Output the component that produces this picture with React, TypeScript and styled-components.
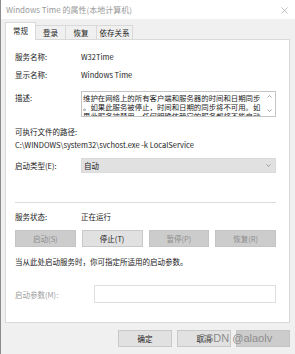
import React from "react";
import styled, { createGlobalStyle, css } from "styled-components";

const Global = createGlobalStyle`
  html, body { margin: 0; padding: 0; background: #f0f0f0; }
  * { box-sizing: border-box; }
`;

const Window = styled.div`
  position: relative;
  width: 295px;
  height: 354px;
  background: #f0f0f0;
  border-left: 1px solid #8c8c8c;
  display: flex;
  flex-direction: column;
  font-family: "Noto Sans CJK SC", sans-serif;
  font-size: 7.5px;
  color: #1a1a1a;
  overflow: hidden;
`;

const TitleBar = styled.div`
  height: 19px;
  background: #fff;
  display: flex;
  align-items: center;
  justify-content: space-between;
  padding: 0 7px 0 5px;
  color: #9a9a9a;
  font-size: 8px;
`;

const Close = styled.svg`
  width: 7px;
  height: 7px;
  margin-top: 1px;
`;

const TabRow = styled.div`
  display: flex;
  align-items: flex-end;
  height: 20px;
  margin-left: 4px;
  position: relative;
  z-index: 1;
`;

const Tab = styled.div<{ $active?: boolean; $w: number }>`
  width: ${(p) => p.$w}px;
  height: 14px;
  display: flex;
  align-items: center;
  justify-content: center;
  border: 1px solid #d9d9d9;
  border-bottom: none;
  margin-right: -1px;
  background: #f0f0f0;
  color: #1a1a1a;
  ${(p) =>
    p.$active &&
    css`
      height: 17px;
      background: #fff;
      margin-bottom: -1px;
      height: 18px;
      padding-bottom: 2px;
    `}
`;

const Panel = styled.div`
  margin: 0 5px 0 4px;
  height: 284px;
  background: #fff;
  border: 1px solid #d9d9d9;
  padding: 0 13px 0 9px;
  display: flex;
  flex-direction: column;
`;

const Field = styled.div<{ $mt: number; $start?: boolean }>`
  display: grid;
  grid-template-columns: 66px 1fr;
  align-items: ${(p) => (p.$start ? "start" : "center")};
  margin-top: ${(p) => p.$mt}px;
  line-height: 12px;
`;

const Label = styled.div<{ $disabled?: boolean; $pt?: number }>`
  color: ${(p) => (p.$disabled ? "#9d9d9d" : "#1a1a1a")};
  padding-top: ${(p) => p.$pt ?? 0}px;
  white-space: nowrap;
`;

const Text = styled.div<{ $mt?: number }>`
  line-height: 12px;
  margin-top: ${(p) => p.$mt ?? 0}px;
  white-space: nowrap;
`;

const DescBox = styled.div`
  height: 26px;
  border: 1px solid #c4c4c4;
  display: flex;
  overflow: hidden;
`;

const DescText = styled.div`
  flex: 1;
  padding: 1px 0 0 1px;
  overflow: hidden;
  font-size: 7.4px;
`;

const DescLine = styled.div`
  line-height: 9px;
  height: 9px;
  white-space: nowrap;
  overflow: hidden;
`;

const ScrollBar = styled.div`
  width: 11px;
  display: flex;
  flex-direction: column;
  justify-content: space-between;
  align-items: center;
  padding: 3px 0 4px;
`;

const Select = styled.div`
  height: 15px;
  background: #e1e1e1;
  border: 1px solid #dadada;
  display: flex;
  align-items: center;
  justify-content: space-between;
  padding: 0 4px 0 2px;
`;

const Separator = styled.div<{ $mt: number }>`
  margin-top: ${(p) => p.$mt}px;
  height: 1px;
  background: #dcdcdc;
`;

const ButtonRow = styled.div`
  margin-top: 7px;
  display: grid;
  grid-template-columns: repeat(4, 1fr);
  column-gap: 6px;
`;

const Btn = styled.div<{ $disabled?: boolean; $w?: number }>`
  height: 17px;
  ${(p) => p.$w && css`width: ${p.$w}px;`}
  display: flex;
  align-items: center;
  justify-content: center;
  background: ${(p) => (p.$disabled ? "#cccccc" : "#e1e1e1")};
  border: 1px solid ${(p) => (p.$disabled ? "#c4c4c4" : "#c9c9c9")};
  color: ${(p) => (p.$disabled ? "#8e8e8e" : "#1a1a1a")};
  white-space: nowrap;
`;

const Input = styled.div`
  height: 18px;
  border: 1px solid #dedede;
  background: #fff;
  margin-left: 13px;
`;

const ParamField = styled.div`
  display: grid;
  grid-template-columns: 66px 1fr;
  align-items: center;
  margin-top: 17px;
`;

const Footer = styled.div`
  display: flex;
  justify-content: flex-end;
  gap: 5px;
  padding: 7px 5px 0 0;
`;

const Watermark = styled.div`
  position: absolute;
  left: 197px;
  top: 332px;
  font-family: "Liberation Sans", Arial, sans-serif;
  font-size: 11px;
  color: #8c8c8c;
  white-space: nowrap;
  pointer-events: none;
`;

const Chevron = ({ up }: { up?: boolean }) => (
  <svg width="5" height="3" viewBox="0 0 5 3">
    <path
      d={up ? "M0.5 2.5 L2.5 0.5 L4.5 2.5" : "M0.5 0.5 L2.5 2.5 L4.5 0.5"}
      fill="none"
      stroke="#8a8a8a"
      strokeWidth="0.8"
    />
  </svg>
);

export default function App() {
  return (
    <>
      <Global />
      <Window>
        <TitleBar>
          <span>Windows Time 的属性(本地计算机)</span>
          <Close viewBox="0 0 7 7">
            <path d="M0.5 0.5 L6.5 6.5 M6.5 0.5 L0.5 6.5" stroke="#b5b5b5" strokeWidth="0.9" />
          </Close>
        </TitleBar>
        <TabRow>
          <Tab $active $w={31}>常规</Tab>
          <Tab $w={31}>登录</Tab>
          <Tab $w={32}>恢复</Tab>
          <Tab $w={37}>依存关系</Tab>
        </TabRow>
        <Panel>
          <Field $mt={11}>
            <Label>服务名称:</Label>
            <Text>W32Time</Text>
          </Field>
          <Field $mt={6}>
            <Label>显示名称:</Label>
            <Text>Windows Time</Text>
          </Field>
          <Field $mt={10} $start>
            <Label $pt={1}>描述:</Label>
            <DescBox>
              <DescText>
                <DescLine>维护在网络上的所有客户端和服务器的时间和日期同步</DescLine>
                <DescLine>。如果此服务被停止，时间和日期的同步将不可用。如</DescLine>
                <DescLine>果此服务被禁用，任何明确依赖它的服务都将不能启动</DescLine>
              </DescText>
              <ScrollBar>
                <Chevron up />
                <Chevron />
              </ScrollBar>
            </DescBox>
          </Field>
          <Text $mt={9}>可执行文件的路径:</Text>
          <Text $mt={1}>C:\WINDOWS\system32\svchost.exe -k LocalService</Text>
          <Field $mt={7}>
            <Label>启动类型(E):</Label>
            <Select>
              <span>自动</span>
              <Chevron />
            </Select>
          </Field>
          <Separator $mt={29} />
          <Field $mt={8}>
            <Label>服务状态:</Label>
            <Text>正在运行</Text>
          </Field>
          <ButtonRow>
            <Btn $disabled>启动(S)</Btn>
            <Btn>停止(T)</Btn>
            <Btn $disabled>暂停(P)</Btn>
            <Btn $disabled>恢复(R)</Btn>
          </ButtonRow>
          <Text $mt={9}>当从此处启动服务时，你可指定所适用的启动参数。</Text>
          <ParamField>
            <Label $disabled>启动参数(M):</Label>
            <Input />
          </ParamField>
        </Panel>
        <Footer>
          <Btn $w={54}>确定</Btn>
          <Btn $w={54}>取消</Btn>
          <Btn $w={54} $disabled />
        </Footer>
        <Watermark>CSDN @alaolv</Watermark>
      </Window>
    </>
  );
}
